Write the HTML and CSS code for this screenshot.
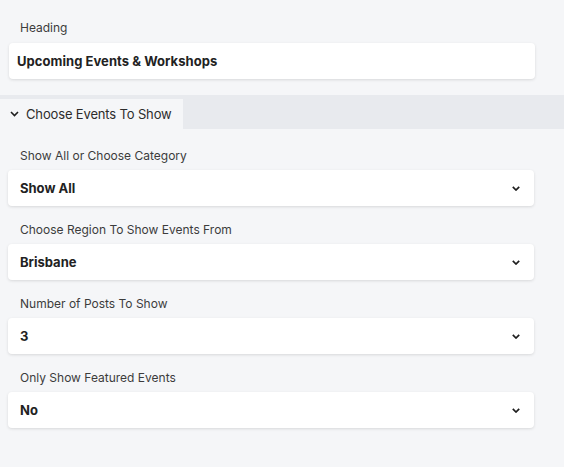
FILE: index.html
```html
<!DOCTYPE html>
<html>
<head>
<meta charset="utf-8">
<link rel="stylesheet" href="styles.css">
</head>
<body>
<div class="panel">
  <div class="top">
    <div class="label label-heading">Heading</div>
    <div class="text-input">Upcoming Events &amp; Workshops</div>
  </div>
  <div class="band">
    <div class="tab">
      <svg class="tab-chev" width="9" height="6" viewBox="0 0 9 6"><path d="M1 1 L4.5 4.5 L8 1" fill="none" stroke="#1e1e1e" stroke-width="1.6"/></svg>
      <span>Choose Events To Show</span>
    </div>
  </div>
  <div class="fields">
    <div class="field">
      <div class="label">Show All or Choose Category</div>
      <div class="select"><span>Show All</span><svg class="chev" width="8" height="5" viewBox="0 0 8 5"><path d="M0.8 0.8 L4 4 L7.2 0.8" fill="none" stroke="#1e1e1e" stroke-width="1.7"/></svg></div>
    </div>
    <div class="field">
      <div class="label">Choose Region To Show Events From</div>
      <div class="select"><span>Brisbane</span><svg class="chev" width="8" height="5" viewBox="0 0 8 5"><path d="M0.8 0.8 L4 4 L7.2 0.8" fill="none" stroke="#1e1e1e" stroke-width="1.7"/></svg></div>
    </div>
    <div class="field">
      <div class="label">Number of Posts To Show</div>
      <div class="select"><span>3</span><svg class="chev" width="8" height="5" viewBox="0 0 8 5"><path d="M0.8 0.8 L4 4 L7.2 0.8" fill="none" stroke="#1e1e1e" stroke-width="1.7"/></svg></div>
    </div>
    <div class="field">
      <div class="label">Only Show Featured Events</div>
      <div class="select"><span>No</span><svg class="chev" width="8" height="5" viewBox="0 0 8 5"><path d="M0.8 0.8 L4 4 L7.2 0.8" fill="none" stroke="#1e1e1e" stroke-width="1.7"/></svg></div>
    </div>
  </div>
</div>
</body>
</html>
```
FILE: styles.css
```css
html, body {
  margin: 0;
  padding: 0;
  background: #f5f6f8;
  font-family: Inter, "Noto Sans", "Liberation Sans", sans-serif;
  color: #1e1e1e;
}
.panel {
  width: 564px;
  height: 467px;
  overflow: hidden;
}
.top {
  padding: 19px 29px 0 9px;
}
.label {
  font-size: 12px;
  line-height: 17px;
  color: #3c3c3c;
  padding-left: 12px;
}
.label-heading {
  padding-left: 11px;
}
.text-input {
  margin-top: 7px;
  height: 36px;
  background: #fff;
  border-radius: 4px;
  box-shadow: 0 1px 3px rgba(0,0,0,0.12);
  font-size: 13px;
  font-weight: 700;
  letter-spacing: 0.05px;
  line-height: 36px;
  padding-left: 8px;
  color: #222;
}
.band {
  margin-top: 16px;
  height: 34px;
  background: #e8eaee;
  display: flex;
  align-items: flex-end;
}
.tab {
  width: 183px;
  height: 30px;
  background: #f5f6f8;
  display: flex;
  align-items: center;
  padding-left: 10px;
  box-sizing: border-box;
  font-size: 13px;
  letter-spacing: -0.15px;
  color: #2c2c2c;
}
.tab-chev {
  margin-right: 7px;
}
.fields {
  padding: 18px 30px 0 8px;
  display: flex;
  flex-direction: column;
  gap: 15px;
}
.field .select {
  margin-top: 6px;
}
.select {
  height: 36px;
  background: #fff;
  border-radius: 4px;
  box-shadow: 0 1px 3px rgba(0,0,0,0.12);
  display: flex;
  align-items: center;
  justify-content: space-between;
  padding: 0 14px 0 12px;
  font-size: 13px;
  font-weight: 700;
  color: #222;
}
.chev {
  display: block;
  margin-top: 1px;
}
```
